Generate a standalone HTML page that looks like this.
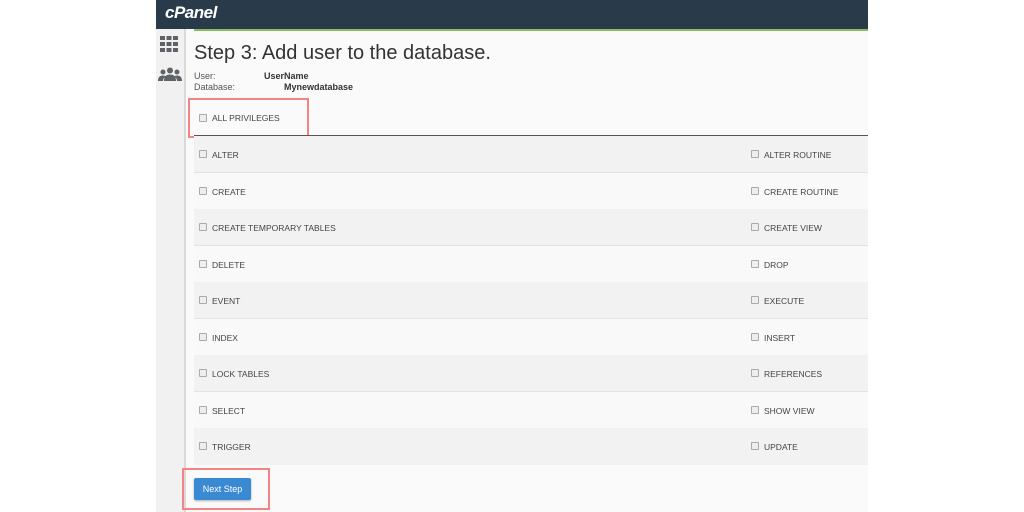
<!DOCTYPE html><html><head><style>
body{margin:0;width:1024px;height:512px;background:#fff;font-family:"Liberation Sans",sans-serif;position:relative;overflow:hidden}
.wrap{position:absolute;left:156px;top:0;width:712px;height:512px;background:#fafafa}
.hdr{position:absolute;left:0;top:0;width:712px;height:29px;background:#293a4a}
.logo{position:absolute;left:9px;top:3px;color:#fff;font-weight:bold;font-style:italic;font-size:17px;letter-spacing:-0.5px}
.green{position:absolute;left:38px;top:29px;width:674px;height:2px;background:#8dbb64}
.side{position:absolute;left:0;top:29px;width:28px;height:483px;background:#f1f1f1;border-right:2px solid #d9d9d9}
.t{position:absolute;color:#333}
.row{position:absolute;left:38px;width:674px;height:36px;border-bottom:1px solid #e3e3e3;font-size:8.5px;color:#444}
.row span{position:absolute;top:14px}
.cb{position:absolute;top:14px;width:6px;height:6px;border:1px solid #aaa;border-radius:1px;background:#eee}
</style></head><body>
<div class="wrap">
<div class="hdr"><div class="logo">cPanel</div></div>
<div class="green"></div>
<div class="side">
<svg style="position:absolute;left:4px;top:7px" width="18" height="16"><g fill="#5f6368"><rect x="0" y="0" width="5" height="4"/><rect x="6.5" y="0" width="5" height="4"/><rect x="13" y="0" width="5" height="4"/><rect x="0" y="6" width="5" height="4"/><rect x="6.5" y="6" width="5" height="4"/><rect x="13" y="6" width="5" height="4"/><rect x="0" y="12" width="5" height="4"/><rect x="6.5" y="12" width="5" height="4"/><rect x="13" y="12" width="5" height="4"/></g></svg>
<svg style="position:absolute;left:2px;top:38px" width="24" height="14"><g fill="#5f6368"><circle cx="12" cy="3.5" r="3"/><circle cx="5" cy="5" r="2.5"/><circle cx="19" cy="5" r="2.5"/><path d="M6 14 Q6 7.5 12 7.5 Q18 7.5 18 14Z"/><path d="M0 14 Q0 8.5 5 8.5 Q7 8.5 8 9.5 Q5 11 5 14Z"/><path d="M24 14 Q24 8.5 19 8.5 Q17 8.5 16 9.5 Q19 11 19 14Z"/></g></svg>
</div>
<div class="t" style="left:38px;top:42px;font-size:20px;color:#333">Step 3: Add user to the database.</div>
<div class="t" style="left:38px;top:71px;font-size:9px;color:#555">User:</div>
<div class="t" style="left:108px;top:71px;font-size:9px;font-weight:bold">UserName</div>
<div class="t" style="left:38px;top:82px;font-size:9px;color:#555">Database:</div>
<div class="t" style="left:128px;top:82px;font-size:9px;font-weight:bold">Mynewdatabase</div>
<div class="cb" style="left:43px;top:114px"></div>
<div class="t" style="left:56px;top:113px;font-size:8.5px;color:#444">ALL PRIVILEGES</div>
<div style="position:absolute;left:32px;top:98px;width:117px;height:36px;border:2px solid #f58383"></div>
<div style="position:absolute;left:38px;top:135px;width:674px;height:1px;background:#555"></div>
<div class="row" style="top:136px;background:#f2f2f2"><div class="cb" style="left:5px"></div><span style="left:18px">ALTER</span><div class="cb" style="left:557px"></div><span style="left:570px">ALTER ROUTINE</span></div>
<div class="row" style="top:173px;background:#f9f9f9"><div class="cb" style="left:5px"></div><span style="left:18px">CREATE</span><div class="cb" style="left:557px"></div><span style="left:570px">CREATE ROUTINE</span></div>
<div class="row" style="top:209px;background:#f2f2f2"><div class="cb" style="left:5px"></div><span style="left:18px">CREATE TEMPORARY TABLES</span><div class="cb" style="left:557px"></div><span style="left:570px">CREATE VIEW</span></div>
<div class="row" style="top:246px;background:#f9f9f9"><div class="cb" style="left:5px"></div><span style="left:18px">DELETE</span><div class="cb" style="left:557px"></div><span style="left:570px">DROP</span></div>
<div class="row" style="top:282px;background:#f2f2f2"><div class="cb" style="left:5px"></div><span style="left:18px">EVENT</span><div class="cb" style="left:557px"></div><span style="left:570px">EXECUTE</span></div>
<div class="row" style="top:319px;background:#f9f9f9"><div class="cb" style="left:5px"></div><span style="left:18px">INDEX</span><div class="cb" style="left:557px"></div><span style="left:570px">INSERT</span></div>
<div class="row" style="top:355px;background:#f2f2f2"><div class="cb" style="left:5px"></div><span style="left:18px">LOCK TABLES</span><div class="cb" style="left:557px"></div><span style="left:570px">REFERENCES</span></div>
<div class="row" style="top:392px;background:#f9f9f9"><div class="cb" style="left:5px"></div><span style="left:18px">SELECT</span><div class="cb" style="left:557px"></div><span style="left:570px">SHOW VIEW</span></div>
<div class="row" style="top:428px;background:#f2f2f2;border-bottom:none;height:37px"><div class="cb" style="left:5px"></div><span style="left:18px">TRIGGER</span><div class="cb" style="left:557px"></div><span style="left:570px">UPDATE</span></div>
<div style="position:absolute;left:38px;top:478px;width:57px;height:22px;background:#3a8ad3;border-radius:2px;color:#fff;font-size:9px;text-align:center;line-height:22px;box-shadow:0 1px 2px rgba(0,0,0,.3)">Next Step</div>
<div style="position:absolute;left:26px;top:468px;width:84px;height:38px;border:2px solid #f58383"></div>
</div>
</body></html>
